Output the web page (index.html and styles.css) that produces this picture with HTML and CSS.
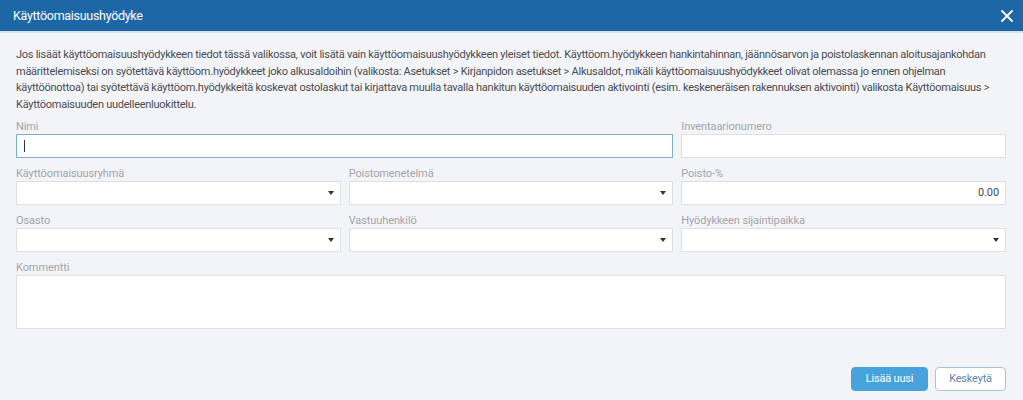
FILE: index.html
```html
<!DOCTYPE html>
<html lang="fi">
<head>
<meta charset="utf-8">
<title>Käyttöomaisuushyödyke</title>
<link rel="stylesheet" href="styles.css">
</head>
<body>
<div class="dialog">
  <header class="dialog-header">
    <h1 class="dialog-title">Käyttöomaisuushyödyke</h1>
    <button class="close-btn" aria-label="Sulje">
      <svg width="12" height="12" viewBox="0 0 12 12"><path d="M1 1 L11 11 M11 1 L1 11" stroke="#fff" stroke-width="1.8" stroke-linecap="round"/></svg>
    </button>
  </header>
  <div class="dialog-body">
    <p class="intro">Jos lisäät käyttöomaisuushyödykkeen tiedot tässä valikossa, voit lisätä vain käyttöomaisuushyödykkeen yleiset tiedot. Käyttöom.hyödykkeen hankintahinnan, jäännösarvon ja poistolaskennan aloitusajankohdan määrittelemiseksi on syötettävä käyttöom.hyödykkeet joko alkusaldoihin (valikosta: Asetukset &gt; Kirjanpidon asetukset &gt; Alkusaldot, mikäli käyttöomaisuushyödykkeet olivat olemassa jo ennen ohjelman käyttöönottoa) tai syötettävä käyttöom.hyödykkeitä koskevat ostolaskut tai kirjattava muulla tavalla hankitun käyttöomaisuuden aktivointi (esim. keskeneräisen rakennuksen aktivointi) valikosta Käyttöomaisuus &gt; Käyttöomaisuuden uudelleenluokittelu.</p>

    <div class="form-grid">
      <div class="field span-2">
        <label class="field-label">Nimi</label>
        <div class="input focused"><span class="caret"></span></div>
      </div>
      <div class="field">
        <label class="field-label">Inventaarionumero</label>
        <div class="input"></div>
      </div>

      <div class="field">
        <label class="field-label">Käyttöomaisuusryhmä</label>
        <div class="input select"><span class="arrow"></span></div>
      </div>
      <div class="field">
        <label class="field-label">Poistomenetelmä</label>
        <div class="input select"><span class="arrow"></span></div>
      </div>
      <div class="field">
        <label class="field-label">Poisto-%</label>
        <div class="input number">0.00</div>
      </div>

      <div class="field">
        <label class="field-label">Osasto</label>
        <div class="input select"><span class="arrow"></span></div>
      </div>
      <div class="field">
        <label class="field-label">Vastuuhenkilö</label>
        <div class="input select"><span class="arrow"></span></div>
      </div>
      <div class="field">
        <label class="field-label">Hyödykkeen sijaintipaikka</label>
        <div class="input select"><span class="arrow"></span></div>
      </div>

      <div class="field span-3">
        <label class="field-label">Kommentti</label>
        <div class="input textarea"></div>
      </div>
    </div>

    <div class="actions">
      <button class="btn btn-primary">Lisää uusi</button>
      <button class="btn btn-secondary">Keskeytä</button>
    </div>
  </div>
</div>
</body>
</html>
```

FILE: styles.css
```css
* { box-sizing: border-box; }
html, body {
  margin: 0;
  padding: 0;
  background: #f3f4f8;
  font-family: Roboto, "Open Sans", "Liberation Sans", sans-serif;
}
.dialog {
  width: 1023px;
  height: 400px;
  background: #f3f4f8;
}
.dialog-header {
  height: 33px;
  background: #1e67a6;
  border-bottom: 2px solid #d3e2ef;
  display: flex;
  align-items: center;
  justify-content: space-between;
  padding: 0 8px 0 13px;
}
.dialog-title {
  margin: 0;
  font-size: 12.5px;
  font-weight: 400;
  letter-spacing: -0.3px;
  color: #fff;
}
.close-btn {
  background: none;
  border: 0;
  padding: 2px;
  width: 16px;
  height: 16px;
  display: flex;
  align-items: center;
  justify-content: center;
  cursor: pointer;
}
.dialog-body {
  padding: 14px 16px 0 16px;
}
.intro {
  margin: 0 8px 0 0;
  font-size: 11px;
  line-height: 16.7px;
  letter-spacing: -0.26px;
  color: #4a4c50;
}
.form-grid {
  margin-top: 5px;
  display: grid;
  grid-template-columns: repeat(3, 1fr);
  column-gap: 8px;
  row-gap: 8px;
  padding-right: 1px;
}
.field { display: flex; flex-direction: column; }
.span-2 { grid-column: span 2; }
.span-3 { grid-column: span 3; }
.field-label {
  font-size: 11px;
  line-height: 14px;
  padding-top: 1px;
  letter-spacing: -0.1px;
  color: #a3a5aa;
}
.input {
  height: 24px;
  background: #fff;
  border: 1px solid #dddfe3;
  position: relative;
  display: flex;
  align-items: center;
  padding: 0 6px;
  font-size: 11px;
  letter-spacing: -0.1px;
  color: #4a4c50;
}
.input.focused { border-color: #7eaecf; }
.caret {
  width: 1px;
  height: 12px;
  background: #333;
  margin-left: 1px;
}
.input.number { justify-content: flex-end; }
.input.select { justify-content: flex-end; }
.arrow {
  width: 0;
  height: 0;
  border-left: 3px solid transparent;
  border-right: 3px solid transparent;
  border-top: 4px solid #333;
}
.input.textarea { height: 54px; }
.actions {
  display: flex;
  justify-content: flex-end;
  gap: 7px;
  margin-top: 38px;
  padding-right: 1px;
}
.btn {
  height: 24px;
  font-family: inherit;
  font-size: 11px;
  letter-spacing: -0.2px;
  border-radius: 4px;
  padding: 0 8px;
  cursor: pointer;
}
.btn-primary {
  width: 77px;
  background: #48a3dd;
  border: 1px solid #48a3dd;
  color: #fff;
}
.btn-secondary {
  width: 71px;
  background: #fff;
  border: 1px solid #a9c4da;
  color: #5c86a9;
}
```
